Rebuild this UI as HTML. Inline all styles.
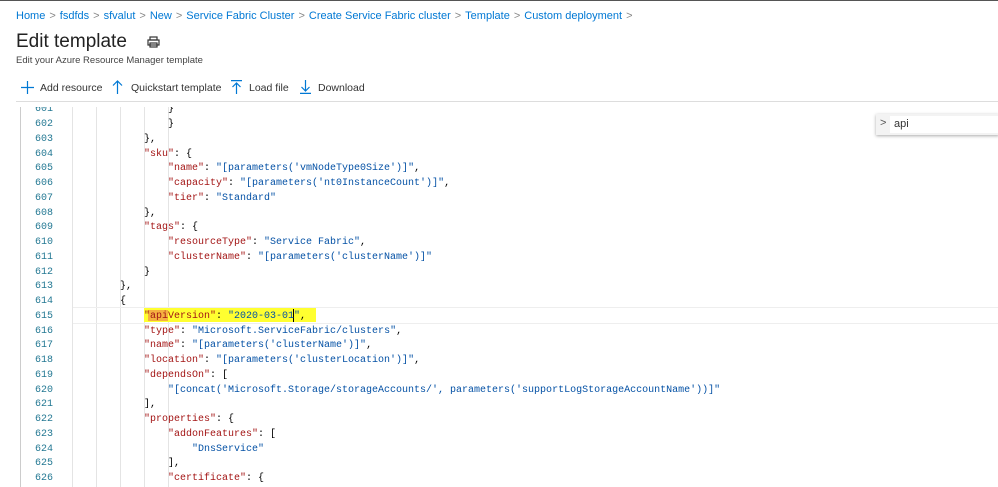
<!DOCTYPE html>
<html><head><style>
body{margin:0;width:998px;height:487px;overflow:hidden;background:#fff;font-family:"Liberation Sans",sans-serif;position:relative}
.top{position:absolute;left:0;top:0;width:998px;height:1px;background:#555}
.bc{position:absolute;left:16px;top:10px;font-size:11px;color:#0078d4;white-space:nowrap}
.bc span{color:#888;margin:0 4px}
h1{position:absolute;left:16px;top:31px;margin:0;font-size:19px;font-weight:normal;color:#222}
.sub{position:absolute;left:16px;top:55px;font-size:9.5px;color:#444}
.tb{position:absolute;top:82px;font-size:10.5px;color:#333}
.sep{position:absolute;left:16px;top:101px;width:982px;height:1px;background:#ddd}
.ed{position:absolute;left:20px;top:107px;width:978px;height:380px;border-left:1px solid #ccc;overflow:hidden}
.ln{position:absolute;width:32px;text-align:right;left:0;font:10px "Liberation Mono",monospace;color:#237893}
.cd{position:absolute;font:10px "Liberation Mono",monospace;white-space:pre;color:#000}
.k{color:#a31515}.s{color:#0451a5}
.g{position:absolute;top:0;width:1px;height:380px;background:#e4e4e4}
</style></head><body>
<div class="top"></div>
<div class="bc">Home<span>&gt;</span>fsdfds<span>&gt;</span>sfvalut<span>&gt;</span>New<span>&gt;</span>Service Fabric Cluster<span>&gt;</span>Create Service Fabric cluster<span>&gt;</span>Template<span>&gt;</span>Custom deployment<span>&gt;</span></div>
<h1>Edit template</h1>
<svg style="position:absolute;left:147px;top:36px" width="13" height="12" viewBox="0 0 13 12" fill="none" stroke="#333" stroke-width="1.2"><rect x="3" y="1" width="7" height="3"/><rect x="1" y="4" width="11" height="5"/><rect x="3" y="7" width="7" height="4"/></svg>
<div class="sub">Edit your Azure Resource Manager template</div>
<svg style="position:absolute;left:21px;top:81px" width="13" height="13" stroke="#0078d4" stroke-width="1.2"><path d="M6.5 0V13M0 6.5H13"/></svg>
<div class="tb" style="left:40px">Add resource</div>
<svg style="position:absolute;left:112px;top:80px" width="11" height="14" stroke="#0078d4" stroke-width="1.2" fill="none"><path d="M5.5 1V14M1 5.5L5.5 1L10 5.5"/></svg>
<div class="tb" style="left:131px">Quickstart template</div>
<svg style="position:absolute;left:231px;top:80px" width="11" height="14" stroke="#0078d4" stroke-width="1.2" fill="none"><path d="M0 0.6H11M5.5 3V14M1.5 7L5.5 3L9.5 7"/></svg>
<div class="tb" style="left:249px">Load file</div>
<svg style="position:absolute;left:300px;top:80px" width="11" height="14" stroke="#0078d4" stroke-width="1.2" fill="none"><path d="M5.5 0V11M1.5 7L5.5 11L9.5 7M0 13.4H11"/></svg>
<div class="tb" style="left:318px">Download</div>
<div class="sep"></div>
<div class="ed">
<div class="g" style="left:51px"></div><div class="g" style="left:75px"></div><div class="g" style="left:99px"></div><div class="g" style="left:123px"></div><div class="g" style="left:147px"></div>
<div style="position:absolute;left:52px;top:200px;width:926px;height:15px;border-top:1px solid #eee;border-bottom:1px solid #eee"></div>
<div style="position:absolute;left:123px;top:201px;width:172px;height:14px;background:#ffff30"></div>
<div style="position:absolute;left:127px;top:203px;width:20px;height:11px;background:#f5b040"></div>
<div style="position:absolute;left:272px;top:202px;width:1px;height:13px;background:#000"></div>
<div id="c"></div>
<div style="position:absolute;left:855px;top:7px;width:123px;height:21px;background:#f3f3f3;box-shadow:0 1px 3px #aaa"><span style="position:absolute;left:4px;top:3px;font-size:11px;color:#555">&gt;</span><div style="position:absolute;left:14px;top:2px;right:0;height:17px;background:#fff;font-size:11px;line-height:17px;padding-left:4px;color:#333">api</div></div>
</div>
<script>
var L=[[601,4,'<span>}</span>'],[602,4,'}'],[603,3,'},'],[604,3,'<k>"sku"</k>: {'],[605,4,'<k>"name"</k>: <s>"[parameters(\'vmNodeType0Size\')]"</s>,'],[606,4,'<k>"capacity"</k>: <s>"[parameters(\'nt0InstanceCount\')]"</s>,'],[607,4,'<k>"tier"</k>: <s>"Standard"</s>'],[608,3,'},'],[609,3,'<k>"tags"</k>: {'],[610,4,'<k>"resourceType"</k>: <s>"Service Fabric"</s>,'],[611,4,'<k>"clusterName"</k>: <s>"[parameters(\'clusterName\')]"</s>'],[612,3,'}'],[613,2,'},'],[614,2,'{'],[615,3,'<k>"apiVersion"</k>: <s>"2020-03-01"</s>,'],[616,3,'<k>"type"</k>: <s>"Microsoft.ServiceFabric/clusters"</s>,'],[617,3,'<k>"name"</k>: <s>"[parameters(\'clusterName\')]"</s>,'],[618,3,'<k>"location"</k>: <s>"[parameters(\'clusterLocation\')]"</s>,'],[619,3,'<k>"dependsOn"</k>: ['],[620,4,'<s>"[concat(\'Microsoft.Storage/storageAccounts/\', parameters(\'supportLogStorageAccountName\'))]"</s>'],[621,3,'],'],[622,3,'<k>"properties"</k>: {'],[623,4,'<k>"addonFeatures"</k>: ['],[624,5,'<s>"DnsService"</s>'],[625,4,'],'],[626,4,'<k>"certificate"</k>: {']];
var h='';L.forEach(function(l){var t=124+(l[0]-602)*14.75-107-5;var c=l[2].replace(/<k>/g,'<span class="k">').replace(/<\/k>/g,'</span>').replace(/<s>/g,'<span class="s">').replace(/<\/s>/g,'</span>');
h+='<div class="ln" style="top:'+t+'px">'+l[0]+'</div><div class="cd" style="top:'+t+'px;left:'+(51+24*l[1])+'px">'+c+'</div>';});
document.getElementById('c').innerHTML=h;
</script>
</body></html>
